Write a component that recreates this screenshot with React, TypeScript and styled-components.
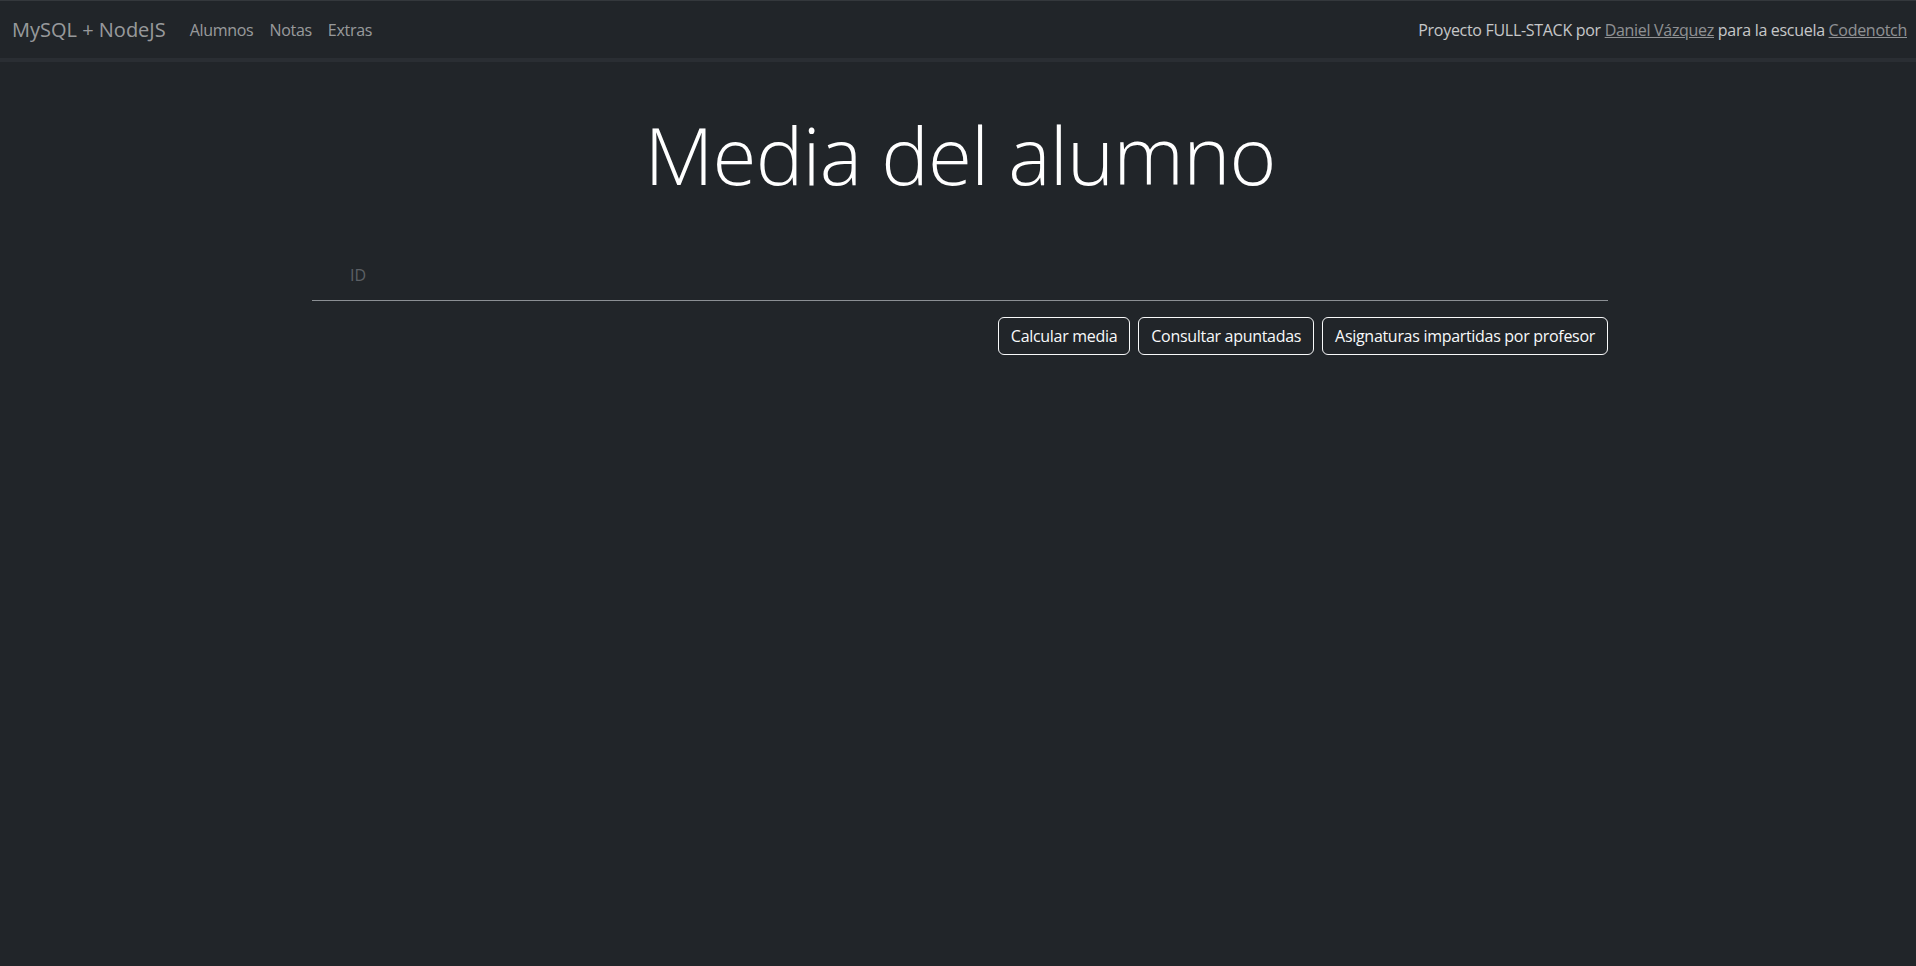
import styled, { createGlobalStyle } from 'styled-components';

const GlobalStyle = createGlobalStyle`
  html, body {
    margin: 0;
    padding: 0;
    background: #212529;
    color: #dee2e6;
    font-family: "Open Sans", "Noto Sans", sans-serif;
    font-size: 16px;
  }
  * { box-sizing: border-box; }
`;

const Navbar = styled.nav`
  height: 58px;
  border-top: 1px solid #34383c;
  background: #212529;
  box-shadow: 0 4px 0 #2a2e33;
  display: flex;
  align-items: center;
  justify-content: space-between;
  padding: 0 9px 0 12px;
`;

const Brand = styled.a`
  font-size: 20px;
  color: rgba(255, 255, 255, 0.55);
  text-decoration: none;
  margin-right: 16px;
`;

const NavLeft = styled.div`
  display: flex;
  align-items: center;
`;

const NavLink = styled.a`
  padding: 8px;
  font-size: 16px;
  letter-spacing: -0.3px;
  color: rgba(255, 255, 255, 0.55);
  text-decoration: none;
`;

const Credits = styled.span`
  font-size: 16px;
  letter-spacing: -0.3px;
  color: rgba(255, 255, 255, 0.75);

  a {
    color: rgba(255, 255, 255, 0.5);
    text-decoration: underline;
  }
`;

const Main = styled.main`
  width: 1296px;
  margin-left: calc(50% - 646px);
`;

const Title = styled.h1`
  margin: 48px 0 40px;
  text-align: center;
  font-size: 80px;
  font-weight: 300;
  line-height: 1.2;
  letter-spacing: -0.85px;
  color: #fff;
`;

const FloatingField = styled.div`
  position: relative;
  height: 59px;
  border-bottom: 1px solid #8b8f93;
`;

const FieldInput = styled.input`
  width: 100%;
  height: 100%;
  background: transparent;
  border: none;
  outline: none;
  color: #dee2e6;
  font: inherit;
  padding: 26px 38px 8px;
`;

const FieldLabel = styled.label`
  position: absolute;
  left: 38px;
  top: calc(50% + 4px);
  transform: translateY(-50%);
  color: #5c6065;
  font-size: 16px;
  pointer-events: none;
`;

const Actions = styled.div`
  display: flex;
  justify-content: flex-end;
  gap: 8px;
  margin-top: 16px;
`;

const OutlineButton = styled.button`
  height: 38px;
  padding: 0 12px;
  border: 1px solid #f8f9fa;
  border-radius: 6px;
  background: transparent;
  color: #f8f9fa;
  font: inherit;
  font-size: 16px;
  letter-spacing: -0.3px;
  cursor: pointer;
`;

export default function App() {
  return (
    <>
      <GlobalStyle />
      <Navbar>
        <NavLeft>
          <Brand href="#">MySQL + NodeJS</Brand>
          <NavLink href="#">Alumnos</NavLink>
          <NavLink href="#">Notas</NavLink>
          <NavLink href="#">Extras</NavLink>
        </NavLeft>
        <Credits>
          Proyecto FULL-STACK por <a href="#">Daniel Vázquez</a> para la escuela <a href="#">Codenotch</a>
        </Credits>
      </Navbar>
      <Main>
        <Title>Media del alumno</Title>
        <FloatingField>
          <FieldInput id="alumno-id" />
          <FieldLabel htmlFor="alumno-id">ID</FieldLabel>
        </FloatingField>
        <Actions>
          <OutlineButton>Calcular media</OutlineButton>
          <OutlineButton>Consultar apuntadas</OutlineButton>
          <OutlineButton>Asignaturas impartidas por profesor</OutlineButton>
        </Actions>
      </Main>
    </>
  );
}
